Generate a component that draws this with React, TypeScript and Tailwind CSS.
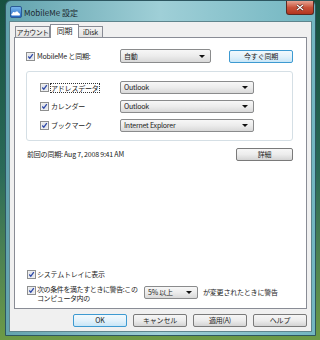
import React from "react";

function Check() {
  return (
    <svg width="9" height="9" viewBox="0 0 9 9" className="shrink-0">
      <rect x="0.5" y="0.5" width="8" height="8" fill="#f6f6f6" stroke="#8e8f8f" />
      <rect x="1.5" y="1.5" width="6" height="6" fill="#e4e6ea" />
      <path d="M2.3 4.5 L3.8 6.3 L6.8 2.1" fill="none" stroke="#2b47a8" strokeWidth="1.3" />
    </svg>
  );
}

function Select({ label, className }: { label: string; className: string }) {
  return (
    <div
      className={`flex shrink-0 items-center justify-between rounded-[2px] border border-[#8a8b8c] bg-linear-to-b from-[#f7f7f7] via-[#ececec] to-[#d9d9d9] pl-[3px] pr-[5px] ${className}`}
    >
      <span className="whitespace-nowrap leading-none">{label}</span>
      <span className="h-0 w-0 border-x-[3px] border-t-[3px] border-x-transparent border-t-[#111]" />
    </div>
  );
}

function Button({ label, active, className }: { label: string; active?: boolean; className: string }) {
  return (
    <div
      className={`flex shrink-0 items-center justify-center whitespace-nowrap rounded-[2px] border leading-none ${
        active
          ? "border-[#3d9ad1] bg-linear-to-b from-[#f2f9fd] via-[#e3f2fb] to-[#c8e6f7]"
          : "border-[#7a7a7a] bg-linear-to-b from-[#f6f6f6] via-[#ececec] to-[#d4d4d4]"
      } ${className}`}
    >
      {label}
    </div>
  );
}

function MobileMeIcon() {
  return (
    <svg width="12" height="12" viewBox="0 0 12 12">
      <defs>
        <linearGradient id="mm" x1="0" y1="0" x2="0" y2="1">
          <stop offset="0" stopColor="#7ab8ee" />
          <stop offset="1" stopColor="#1f63c2" />
        </linearGradient>
      </defs>
      <rect x="0.5" y="0.5" width="11" height="11" rx="1.5" fill="url(#mm)" stroke="#2a5a95" />
      <path
        d="M2 9.5 C1 9.5 1 7.5 2.4 7.5 C2.6 6 4.3 5.6 5 6.6 C5.6 5 8.2 5 8.6 6.9 C10 6.9 10.6 9.5 9 9.5 Z"
        fill="#fff"
      />
    </svg>
  );
}

export default function App() {
  return (
    <div className="h-[340px] w-[320px] overflow-hidden bg-linear-to-b from-[#17503f] via-[#2a6a58] to-[#6d9a46] pl-[5px] font-['Noto_Sans_CJK_JP',sans-serif] text-[7px] tracking-[-0.2px] text-[#1b1b1b]">
      <div className="flex h-[336px] w-[311px] flex-col rounded-t-[6px] border border-[#2d5660] bg-linear-to-r from-[#62a3ae] via-[#9fcfd7] to-[#72b6c1] px-[3px] pb-[3px]">
        {/* Title bar */}
        <div className="flex h-[20px] items-start">
          <div className="ml-[1px] mt-[5px]">
            <MobileMeIcon />
          </div>
          <span className="ml-[2px] mt-[6px] text-[8px] leading-[12px] tracking-normal text-[#1d2a30]">MobileMe 設定</span>
          <div className="-mr-[2px] ml-auto flex h-[14px] w-[28px] items-center justify-center rounded-b-[3px] border border-t-0 border-[#5b2a22] bg-linear-to-b from-[#e6a393] via-[#c8523a] to-[#b2361f]">
            <svg width="8" height="7" viewBox="0 0 8 7">
              <path d="M1 1 L7 6 M7 1 L1 6" stroke="#4a1a12" strokeWidth="2.4" />
              <path d="M1 1 L7 6 M7 1 L1 6" stroke="#fff" strokeWidth="1.3" />
            </svg>
          </div>
        </div>

        {/* Client area */}
        <div className="flex flex-1 flex-col border border-[#5f858d] bg-[#f0f0f0] px-[4px]">
          {/* Tabs */}
          <div className="relative z-10 flex h-[15px] items-end pl-[1px]">
            <div className="flex h-[11px] w-[35px] items-center justify-center whitespace-nowrap border border-b-0 border-[#898c95] bg-linear-to-b from-[#f4f4f4] to-[#e2e2e2] leading-none tracking-[-0.6px]">
              アカウント
            </div>
            <div className="-mb-[1px] flex h-[14px] w-[29px] items-start justify-center border border-b-0 border-[#898c95] bg-white pt-[2px] text-[8px] leading-none">
              同期
            </div>
            <div className="flex h-[11px] w-[24px] items-center justify-center border border-b-0 border-l-0 border-[#898c95] bg-linear-to-b from-[#f4f4f4] to-[#e2e2e2] leading-none">
              iDisk
            </div>
          </div>

          {/* Tab panel */}
          <div className="flex h-[272px] flex-col border border-[#898c95] bg-white pb-[6px] pl-[11px] pr-[13px] pt-[11px]">
            <div className="flex h-[14px] items-center">
              <div className="flex w-[94px] items-center gap-[2px]">
                <Check />
                <span className="whitespace-nowrap leading-none">MobileMe と同期:</span>
              </div>
              <Select label="自動" className="h-[14px] w-[91px]" />
              <Button label="今すぐ同期" active className="ml-auto h-[13px] w-[64px]" />
            </div>

            <div className="mt-[8px] flex flex-col gap-[6px] rounded-[3px] border border-[#d5dfe5] pb-[8px] pl-[13px] pt-[9px]">
              <div className="flex h-[13px] items-center">
                <div className="flex w-[80px] items-center gap-[1px]">
                  <Check />
                  <span className="whitespace-nowrap border border-dotted border-[#333] leading-[8px]">アドレスデータ</span>
                </div>
                <Select label="Outlook" className="h-[13px] w-[134px]" />
              </div>
              <div className="flex h-[13px] items-center">
                <div className="flex w-[80px] items-center gap-[2px]">
                  <Check />
                  <span className="leading-none">カレンダー</span>
                </div>
                <Select label="Outlook" className="h-[13px] w-[134px]" />
              </div>
              <div className="flex h-[13px] items-center">
                <div className="flex w-[80px] items-center gap-[2px]">
                  <Check />
                  <span className="leading-none">ブックマーク</span>
                </div>
                <Select label="Internet Explorer" className="h-[13px] w-[134px]" />
              </div>
            </div>

            <div className="mt-[7px] flex h-[13px] items-center pl-[1px]">
              <span className="leading-none">前回の同期: Aug 7, 2008 9:41 AM</span>
              <Button label="詳細" className="ml-auto h-[13px] w-[57px]" />
            </div>

            <div className="flex-1" />

            <div className="flex h-[9px] items-center gap-[1px] pl-[1px]">
              <Check />
              <span className="leading-none">システムトレイに表示</span>
            </div>

            <div className="mt-[6px] flex h-[17px] items-start pl-[1px]">
              <div className="mt-[1px]">
                <Check />
              </div>
              <span className="ml-[1px] w-[107px] whitespace-nowrap leading-[8.5px] tracking-[-0.4px]">
                次の条件を満たすときに警告:この
                <br />
                コンピュータ内の
              </span>
              <Select label="5% 以上" className="mt-[1px] h-[13px] w-[54px]" />
              <span className="ml-[5px] mt-[4px] whitespace-nowrap leading-none">が変更されたときに警告</span>
            </div>
          </div>

          {/* Dialog buttons */}
          <div className="mt-[5px] flex justify-end gap-[6px]">
            <Button label="OK" active className="h-[13px] w-[54px]" />
            <Button label="キャンセル" className="h-[13px] w-[54px]" />
            <Button label="適用(A)" className="h-[13px] w-[54px]" />
            <Button label="ヘルプ" className="h-[13px] w-[54px]" />
          </div>
        </div>
      </div>
    </div>
  );
}
